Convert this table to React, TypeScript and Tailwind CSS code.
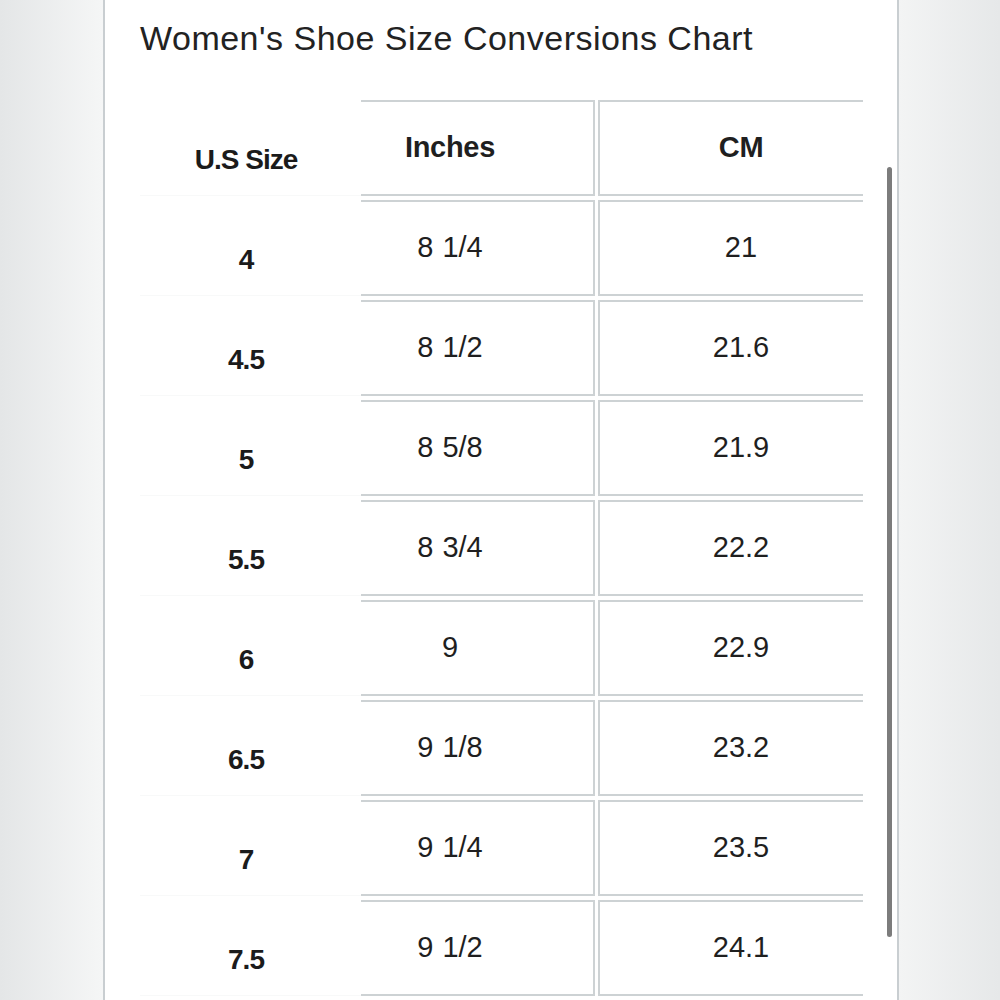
import React from 'react';

const rows: [string, string, string][] = [
  ['4', '8 1/4', '21'],
  ['4.5', '8 1/2', '21.6'],
  ['5', '8 5/8', '21.9'],
  ['5.5', '8 3/4', '22.2'],
  ['6', '9', '22.9'],
  ['6.5', '9 1/8', '23.2'],
  ['7', '9 1/4', '23.5'],
  ['7.5', '9 1/2', '24.1'],
];

function Row({ size, inches, cm, head }: { size: string; inches: string; cm: string; head?: boolean }) {
  const val = head ? 'font-bold tracking-[-0.3px] text-[29px]' : 'text-[29px] [word-spacing:1px]';
  return (
    <div className="flex h-[100px] items-start">
      <div className="flex h-[96px] w-[221px] items-center justify-center border-b border-[#f8f9f9] pt-6 pr-[9px] text-[28px] font-bold tracking-[-1px] text-[#1b1b1b]">
        {size}
      </div>
      <div className={`flex h-[96px] w-[234px] items-center justify-center border-y-2 border-r-2 border-[#cdd2d4] pr-[54px] text-[#1f1f1f] ${val}`}>
        {inches}
      </div>
      <div className={`ml-[3px] flex h-[96px] w-[265px] items-center justify-center border-y-2 border-l-2 border-[#cdd2d4] pl-[19px] text-[#1f1f1f] ${val}`}>
        {cm}
      </div>
    </div>
  );
}

export default function App() {
  return (
    <div className="flex h-[1000px] w-[1000px] overflow-hidden font-['Liberation_Sans',Arial,sans-serif]">
      <div className="w-[103px] bg-gradient-to-r from-[#e4e6e7] to-[#f5f6f6]" />
      <div className="relative flex-1 border-x-2 border-[#c9ced1] bg-white pl-[35px]">
        <div className="h-[100px] pt-[21px] text-[34px] leading-none tracking-[0.5px] text-[#222]">
          Women's Shoe Size Conversions Chart
        </div>
        <Row size="U.S Size" inches="Inches" cm="CM" head />
        {rows.map(([s, i, c]) => (
          <Row key={s} size={s} inches={i} cm={c} />
        ))}
        <div className="absolute right-[5px] top-[167px] h-[770px] w-[5px] rounded-full bg-[#7c7c7c]" />
      </div>
      <div className="w-[101px] bg-gradient-to-r from-[#f3f4f4] to-[#e6e8e9]" />
    </div>
  );
}
